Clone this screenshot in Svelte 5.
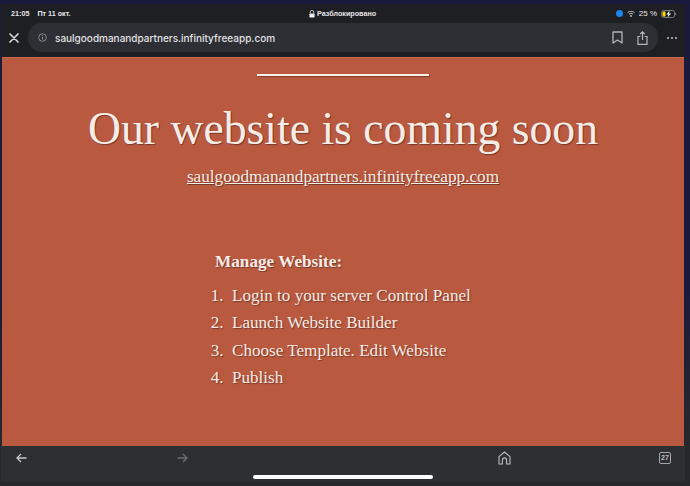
<script lang="ts">
  const steps = [
    'Login to your server Control Panel',
    'Launch Website Builder',
    'Choose Template. Edit Website',
    'Publish'
  ];
  const host = 'saulgoodmanandpartners.infinityfreeapp.com';
</script>

<div class="screen">
  <div class="top">
    <div class="status">
      <div class="left"><span>21:05</span><span>Пт 11 окт.</span></div>
      <div class="center">
        <svg width="6" height="8" viewBox="0 0 6 8"><path d="M1.2 3.5V2.2a1.8 1.8 0 0 1 3.6 0v1.3" fill="none" stroke="#e8e8e8" stroke-width=".8"/><rect x=".4" y="3.4" width="5.2" height="4.2" rx=".7" fill="#e8e8e8"/></svg>
        <span>Разблокировано</span>
      </div>
      <div class="right">
        <span class="dot"></span>
        <svg width="8" height="6" viewBox="0 0 8 6"><path d="M.5 1.6C2.6-.1 5.4-.1 7.5 1.6M1.9 3.2c1.3-1 2.9-1 4.2 0" fill="none" stroke="#c8c8c8" stroke-width=".9"/><circle cx="4" cy="5" r=".9" fill="#c8c8c8"/></svg>
        <span>25 %</span>
        <svg width="16" height="8" viewBox="0 0 16 8"><rect x=".5" y=".5" width="13" height="7" rx="2" fill="none" stroke="#77787c"/><rect x="1.5" y="1.5" width="3" height="5" rx=".6" fill="#f5d90a"/><path d="M8.6.6 5.4 4.4h2l-.8 3 3.4-4h-2z" fill="#f2f2f2"/><path d="M14.6 2.8v2.4" stroke="#77787c"/></svg>
      </div>
    </div>
    <div class="toolbar">
      <svg class="close" width="10" height="10" viewBox="0 0 10 10"><path d="M1 1l8 8M9 1L1 9" stroke="#d4d4d6" stroke-width="1.7" stroke-linecap="round"/></svg>
      <div class="address">
        <svg width="9" height="9" viewBox="0 0 9 9"><circle cx="4.5" cy="4.5" r="3.8" fill="none" stroke="#9a9b9f" stroke-width=".8"/><path d="M4.5 4v2.6M4.5 2.3v.9" stroke="#9a9b9f" stroke-width=".9"/></svg>
        <span class="url">{host}</span>
        <svg class="bookmark" width="11" height="13" viewBox="0 0 11 13"><path d="M1 1h9v11L5.500 9 1 12z" fill="none" stroke="#b4b5b8" stroke-width="1.300" stroke-linejoin="round"/></svg>
        <svg class="share" width="11" height="14" viewBox="0 0 11 14"><path d="M3.300 5.500H1v7.800h9V5.500H7.700M5.500 9V1M3.200 3l2.300-2.200L7.800 3" fill="none" stroke="#b4b5b8" stroke-width="1.200"/></svg>
      </div>
      <div class="more"><i></i><i></i><i></i></div>
    </div>
  </div>

  <main class="page">
    <div class="rule"></div>
    <h1>Our website is coming soon</h1>
    <a class="link" href="#top">{host}</a>
    <section class="manage">
      <h2>Manage Website:</h2>
      <ol>
        {#each steps as step}
          <li>{step}</li>
        {/each}
      </ol>
    </section>
  </main>

  <div class="bottom">
    <div class="nav">
      <svg width="11" height="10" viewBox="0 0 11 10"><path d="M10.500 5H1.500M5 1 1 5l4 4" fill="none" stroke="#c4c5c8" stroke-width="1.300"/></svg>
      <svg class="fwd" width="11" height="10" viewBox="0 0 11 10"><path d="M.5 5h9M6 1l4 4-4 4" fill="none" stroke="#6c6d71" stroke-width="1.300"/></svg>
      <svg class="home" width="13" height="14" viewBox="0 0 13 14"><path d="M1 13V5.600L6.500 1 12 5.600V13H8.600V9a2.100 2.100 0 0 0-4.200 0v4z" fill="none" stroke="#bcbdc0" stroke-width="1.100" stroke-linejoin="round"/></svg>
      <div class="tabs">27</div>
    </div>
    <div class="handle"></div>
  </div>
</div>

<style>
  :global(body) { margin: 0; background: #1a1a3c; }
  .screen {
    width: 690px;
    height: 486px;
    display: flex;
    flex-direction: column;
    overflow: hidden;
    background: linear-gradient(#1a1a3c 0 60%, #27282c 90%);
    padding: 4px 5px 4px 1px;
    box-sizing: border-box;
    font-family: "Liberation Sans", Arial, sans-serif;
  }
  .top { background: #1e1f23; height: 53px; flex: none; }
  .status {
    height: 19px;
    position: relative;
    display: flex;
    align-items: center;
    justify-content: space-between;
    padding: 0 8px 0 10px;
    font-size: 7.200px;
    font-weight: 700;
    color: #e6e6e8;
  }
  .left { display: flex; gap: 8px; }
  .center {
    position: absolute;
    left: 308px;
    display: flex;
    align-items: center;
    gap: 2px;
  }
  .right { display: flex; align-items: center; gap: 4px; font-size: 8px; font-weight: 400; }
  .dot { width: 7px; height: 7px; border-radius: 50%; background: #1f84ee; }
  .toolbar { display: flex; align-items: center; height: 29px; }
  .close { margin: 0 9px 0 8px; flex: none; }
  .address {
    flex: 1;
    height: 29px;
    background: #2e2f34;
    border-radius: 14px;
    display: flex;
    align-items: center;
    padding: 0 10px 0 10px;
    box-sizing: border-box;
  }
  .url { font-family: Inter, "Liberation Sans", sans-serif; font-weight: 500; font-size: 10px; color: #e2e2e4; margin-left: 8px; flex: 1; }
  .share { margin-left: 14px; }
  .more { display: flex; gap: 2px; margin: 0 8px 0 9px; }
  .more i { width: 2px; height: 2px; background: #c4c5c8; border-radius: 50%; }
  .page {
    flex: 1;
    background: #b95a40;
    margin: 0 1px;
    border-top: 1px solid #c9694e;
    color: #f4ece6;
    font-family: "Liberation Serif", "Times New Roman", serif;
    text-shadow: 1px 1px 1px rgba(70, 30, 20, 0.55);
    display: flex;
    flex-direction: column;
    align-items: center;
  }
  .rule {
    width: 172px;
    height: 2px;
    margin-top: 16px;
    background: #f6efe9;
    box-shadow: 1px 1px 1px rgba(70, 30, 20, 0.5);
  }
  h1 { font-size: 45.700px; font-weight: 400; margin: 26px 0 0; line-height: 53px; }
  .link { color: inherit; font-size: 17.200px; line-height: 22px; margin-top: 11px; text-decoration: underline; }
  .manage { align-self: flex-start; margin: 63px 0 0 196px; font-size: 17.100px; }
  h2 { font-size: 17.200px; font-weight: 700; margin: 0 0 0 17px; line-height: 22px; }
  ol { margin: 9px 0 0; padding: 0 0 0 34px; }
  li { line-height: 27.400px; }
  li::marker { content: counter(list-item) ".\00a0\00a0"; }
  .bottom { height: 36px; flex: none; background: #2e2f33; position: relative; }
  .nav { height: 24px; display: flex; align-items: center; padding-left: 15px; }
  .fwd { margin-left: 150px; }
  .home { margin-left: 310px; }
  .tabs {
    margin-left: 148px;
    width: 10px;
    height: 10px;
    border: 1px solid #a6a7aa;
    border-radius: 2px;
    font-size: 7px;
    font-weight: 700;
    color: #bcbdc0;
    text-align: center;
    line-height: 10px;
  }
  .handle { position: absolute; left: 252px; bottom: 3px; width: 180px; height: 4px; background: #fff; border-radius: 2px; }
</style>
